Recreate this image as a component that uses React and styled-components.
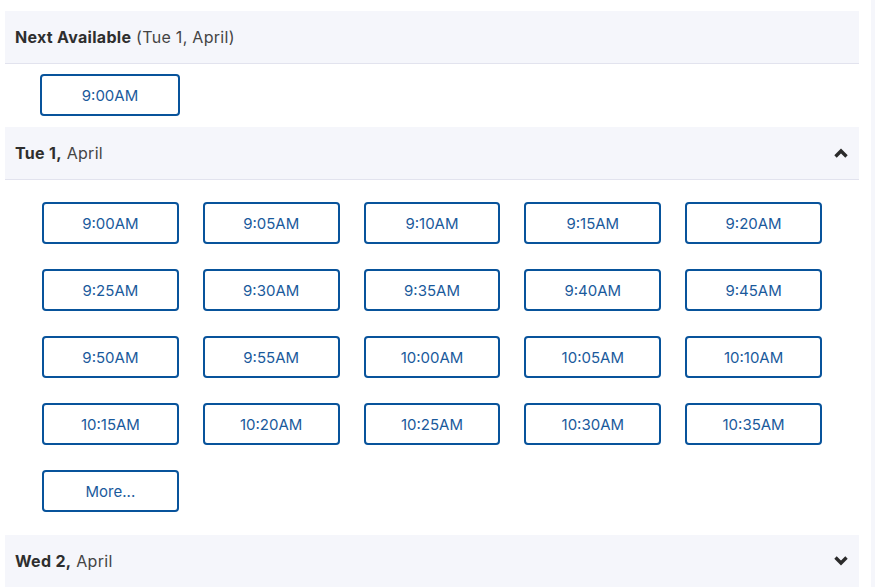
import React from "react";
import styled, { createGlobalStyle } from "styled-components";

const GlobalStyle = createGlobalStyle`
  html, body {
    margin: 0;
    padding: 0;
    background: #ffffff;
    font-family: Inter, "Noto Sans", Arial, sans-serif;
  }
`;

const Page = styled.div`
  display: flex;
  width: 875px;
  height: 587px;
  overflow: hidden;
  background: #fff;
`;

const Panel = styled.div`
  margin: 11px 0 0 5px;
  width: 854px;
  display: flex;
  flex-direction: column;
`;

const SideStrip = styled.div`
  margin-left: 12px;
  width: 4px;
  background: #f5f6fb;
`;

const DayHeader = styled.div`
  display: flex;
  align-items: center;
  justify-content: space-between;
  height: 52px;
  padding: 0 11px 0 10px;
  background: #f5f6fb;
  border-bottom: ${(p) => (p.$open ? "1px solid #e2e3ee" : "none")};
  font-size: 16px;
  color: #444;
  flex-shrink: 0;
`;

const Title = styled.div`
  letter-spacing: 0.3px;
  b {
    font-weight: 700;
    color: #2e2e2e;
  }
`;

const Toggle = styled.svg`
  width: 14px;
  height: 10px;
  fill: none;
  stroke: #2b2b2b;
  stroke-width: 3.4;
`;

const SlotArea = styled.div`
  padding: ${(p) => p.$pad};
`;

const SlotGrid = styled.div`
  display: grid;
  grid-template-columns: repeat(5, 1fr);
  column-gap: 24px;
  row-gap: 25px;
  width: 780px;
`;

const Slot = styled.button`
  box-sizing: border-box;
  width: ${(p) => p.$w || "100%"};
  height: 42px;
  background: #fff;
  border: 2px solid #08539b;
  border-radius: 4px;
  color: #1a5a9c;
  font-family: inherit;
  font-size: 15px;
  cursor: pointer;
  padding: 0;
`;

const times = [
  "9:00AM", "9:05AM", "9:10AM", "9:15AM", "9:20AM",
  "9:25AM", "9:30AM", "9:35AM", "9:40AM", "9:45AM",
  "9:50AM", "9:55AM", "10:00AM", "10:05AM", "10:10AM",
  "10:15AM", "10:20AM", "10:25AM", "10:30AM", "10:35AM",
];

const Chevron = ({ up }) => (
  <Toggle viewBox="0 0 14 10">
    <path d={up ? "M1.5 8.5 L7 3 L12.5 8.5" : "M1.5 1.5 L7 7 L12.5 1.5"} />
  </Toggle>
);

export default function App() {
  return (
    <>
      <GlobalStyle />
      <Page>
        <Panel>
          <DayHeader $open>
            <Title>
              <b>Next Available</b> (Tue 1, April)
            </Title>
          </DayHeader>
          <SlotArea $pad="10px 35px 11px 35px">
            <Slot $w="140px">9:00AM</Slot>
          </SlotArea>

          <DayHeader $open>
            <Title>
              <b>Tue 1,</b> April
            </Title>
            <Chevron up />
          </DayHeader>
          <SlotArea $pad="22px 37px 23px 37px">
            <SlotGrid>
              {times.map((t) => (
                <Slot key={t}>{t}</Slot>
              ))}
              <Slot>More...</Slot>
            </SlotGrid>
          </SlotArea>

          <DayHeader>
            <Title>
              <b>Wed 2,</b> April
            </Title>
            <Chevron />
          </DayHeader>
        </Panel>
        <SideStrip />
      </Page>
    </>
  );
}
